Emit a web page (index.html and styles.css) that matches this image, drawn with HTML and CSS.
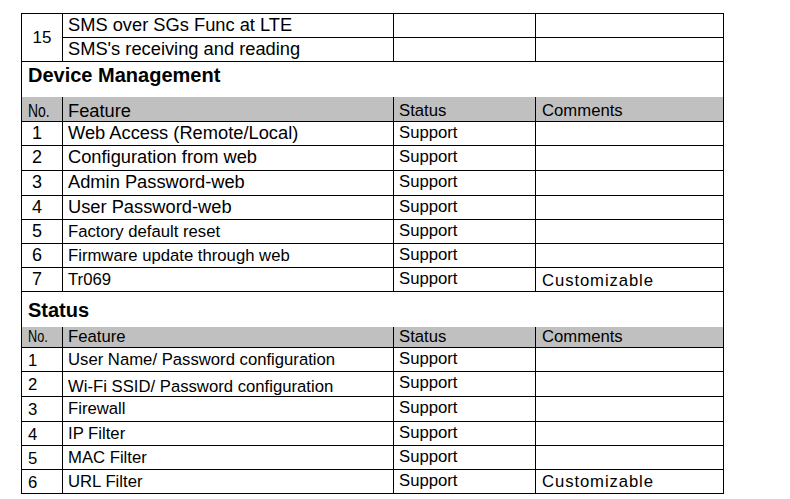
FILE: index.html
```html
<!DOCTYPE html>
<html lang="en">
<head>
<meta charset="utf-8">
<title>Feature list</title>
<link rel="stylesheet" href="styles.css">
</head>
<body>
<table class="spec">
  <colgroup>
    <col class="c-no"><col class="c-feat"><col class="c-status"><col class="c-comm">
  </colgroup>
  <tbody>
    <tr class="r24">
      <td class="num-15" rowspan="2">15</td>
      <td class="feat-l">SMS over SGs Func at LTE</td>
      <td></td><td></td>
    </tr>
    <tr class="r24">
      <td class="feat-l">SMS's receiving and reading</td>
      <td></td><td></td>
    </tr>

    <tr class="r-sec"><td class="sec sec-dm" colspan="4">Device Management</td></tr>
    <tr class="r-hd-dm head head-dm">
      <td class="h-no"><span class="narrow">No.</span></td>
      <td class="h-feat">Feature</td>
      <td class="h-stat">Status</td>
      <td class="h-comm">Comments</td>
    </tr>
    <tr class="r24"><td class="num">1</td><td class="feat-l">Web Access (Remote/Local)</td><td class="stat">Support</td><td></td></tr>
    <tr class="r25"><td class="num">2</td><td class="feat-l">Configuration from web</td><td class="stat">Support</td><td></td></tr>
    <tr class="r25"><td class="num">3</td><td class="feat-l">Admin Password-web</td><td class="stat">Support</td><td></td></tr>
    <tr class="r24"><td class="num">4</td><td class="feat-l">User Password-web</td><td class="stat">Support</td><td></td></tr>
    <tr class="r24"><td class="num">5</td><td class="feat-s">Factory default reset</td><td class="stat">Support</td><td></td></tr>
    <tr class="r24"><td class="num">6</td><td class="feat-s">Firmware update through web</td><td class="stat">Support</td><td></td></tr>
    <tr class="r24"><td class="num">7</td><td class="feat-s">Tr069</td><td class="stat">Support</td><td class="comm comm-low">Customizable</td></tr>

    <tr class="r-sec"><td class="sec sec-st" colspan="4">Status</td></tr>
    <tr class="r-hd-st head head-st">
      <td class="h-no"><span class="narrow">No.</span></td>
      <td class="h-feat">Feature</td>
      <td class="h-stat">Status</td>
      <td class="h-comm">Comments</td>
    </tr>
    <tr class="r24"><td class="num-s">1</td><td class="feat-s">User Name/ Password configuration</td><td class="stat">Support</td><td></td></tr>
    <tr class="r25"><td class="num-s">2</td><td class="feat-s feat-drop">Wi-Fi SSID/ Password configuration</td><td class="stat">Support</td><td></td></tr>
    <tr class="r25"><td class="num-s">3</td><td class="feat-s">Firewall</td><td class="stat">Support</td><td></td></tr>
    <tr class="r24"><td class="num-s">4</td><td class="feat-s">IP Filter</td><td class="stat">Support</td><td></td></tr>
    <tr class="r24"><td class="num-s">5</td><td class="feat-s">MAC Filter</td><td class="stat">Support</td><td></td></tr>
    <tr class="r24"><td class="num-s">6</td><td class="feat-s">URL Filter</td><td class="stat">Support</td><td class="comm">Customizable</td></tr>
  </tbody>
</table>
</body>
</html>
```

FILE: styles.css
```css
html, body {
  margin: 0;
  padding: 0;
  background: #ffffff;
}

body {
  font-family: "Liberation Sans", Arial, sans-serif;
  color: #000000;
}

.spec {
  border-collapse: collapse;
  table-layout: fixed;
  width: 703px;
  margin: 13px 0 0 21px;
}

.c-no { width: 41px; }
.c-feat { width: 331px; }
.c-status { width: 142px; }
.c-comm { width: 188px; }

.r24 { height: 24px; }
.r25 { height: 25px; }
.r-sec { height: 35.5px; }
.r-hd-dm { height: 24.5px; }
.r-hd-st { height: 20.5px; }

.spec td {
  border: 1px solid #000000;
  padding: 1px 2px 0 5px;
  vertical-align: top;
  line-height: 20px;
  font-size: 16.7px;
  white-space: nowrap;
  overflow: hidden;
}

/* number column */
.spec .num-15 {
  vertical-align: middle;
  text-align: center;
  font-size: 17px;
  padding: 0;
}

.spec .num {
  font-size: 18px;
  padding-left: 10px;
  padding-top: 1px;
}

.spec .num-s {
  font-size: 16.7px;
  padding-left: 6px;
  padding-top: 3px;
}

/* feature column */
.spec .feat-l {
  font-size: 18.3px;
  padding-top: 1px;
}

.spec .feat-s {
  font-size: 16.7px;
  padding-top: 2px;
}

.spec .feat-drop {
  line-height: 18px;
  padding-top: 6px;
}

/* status + comments */
.spec .stat {
  padding-left: 5px;
  padding-top: 1px;
}

.spec .comm {
  padding-left: 6px;
  padding-top: 2px;
  letter-spacing: 0.9px;
}

.spec .comm-low {
  line-height: 18px;
  padding-top: 4px;
}

/* section titles */
.spec .sec {
  font-weight: bold;
  font-size: 20px;
  padding-left: 6px;
  border-bottom: none;
}

.spec .sec-dm { padding-top: 3px; }
.spec .sec-st { padding-top: 8px; }

/* header rows */
.head td {
  background: #c0c0c0;
  border-top: none;
}

.head-dm td {
  padding-top: 4px;
}

.head-dm .h-no,
.head-dm .h-feat {
  font-size: 18.3px;
}

.head-st td {
  line-height: 18px;
  padding-top: 1px;
}

.spec .h-no { padding-left: 6px; }
.spec .h-stat { padding-left: 5px; }
.spec .h-comm { padding-left: 6px; }

.narrow {
  display: inline-block;
  transform: scaleX(0.76);
  transform-origin: left center;
}
```
